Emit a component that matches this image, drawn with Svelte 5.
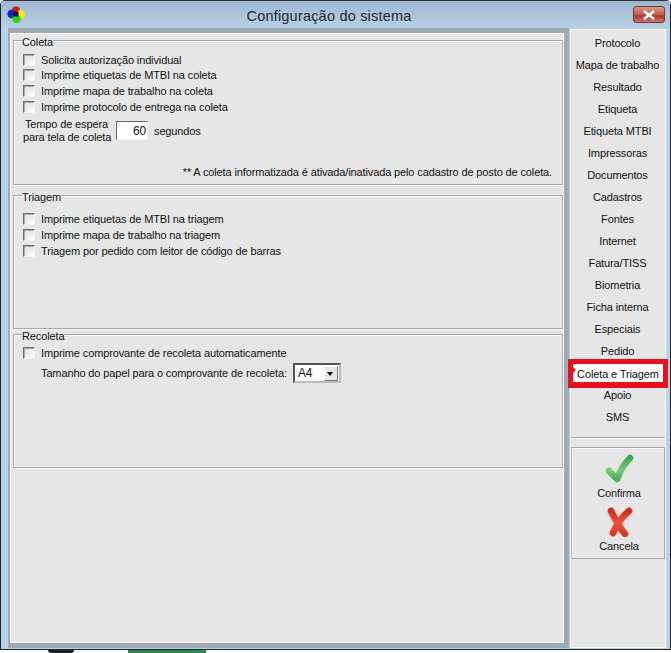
<script>
  const coleta = [
    'Solicita autorização individual',
    'Imprime etiquetas de MTBI na coleta',
    'Imprime mapa de trabalho na coleta',
    'Imprime protocolo de entrega na coleta'
  ];
  const triagem = [
    'Imprime etiquetas de MTBI na triagem',
    'Imprime mapa de trabalho na triagem',
    'Triagem por pedido com leitor de código de barras'
  ];
  const menu = [
    'Protocolo', 'Mapa de trabalho', 'Resultado', 'Etiqueta', 'Etiqueta MTBI',
    'Impressoras', 'Documentos', 'Cadastros', 'Fontes', 'Internet', 'Fatura/TISS',
    'Biometria', 'Ficha interna', 'Especiais', 'Pedido', 'Coleta e Triagem', 'Apoio', 'SMS'
  ];
</script>

<div class="screen">
  <div class="window">
    <header class="titlebar">
      <svg class="app-icon" width="18" height="18" viewBox="0 0 18 18">
        <circle cx="9" cy="4.5" r="4.2" fill="#d8141c" />
        <circle cx="4.5" cy="8" r="4.2" fill="#1420c8" />
        <circle cx="13.5" cy="8.5" r="4.4" fill="#f4ee20" />
        <circle cx="9.5" cy="13" r="4.2" fill="#30d020" />
        <rect x="6.5" y="5.5" width="5" height="5" fill="#0a0a3a" />
      </svg>
      <h1>Configuração do sistema</h1>
      <button class="close" aria-label="Fechar">
        <svg width="14" height="10" viewBox="0 0 14 10">
          <path d="M2 1 L12 9 M12 1 L2 9" stroke="#fff" stroke-width="2.6" fill="none" />
        </svg>
      </button>
    </header>

    <div class="client">
      <div class="left">
        <main class="panel">
          <fieldset class="coleta">
            <legend><span>Coleta</span></legend>
            <div class="checks">
              {#each coleta as item}
                <label class="check"><span class="box"></span>{item}</label>
              {/each}
            </div>
            <div class="wait">
              <span class="wait-label">Tempo de espera<br />para tela de coleta</span>
              <span class="input">60</span>
              <span>segundos</span>
            </div>
            <p class="note">** A coleta informatizada é ativada/inativada pelo cadastro de posto de coleta.</p>
          </fieldset>

          <fieldset class="triagem">
            <legend><span>Triagem</span></legend>
            <div class="checks">
              {#each triagem as item}
                <label class="check"><span class="box"></span>{item}</label>
              {/each}
            </div>
          </fieldset>

          <fieldset class="recoleta">
            <legend><span>Recoleta</span></legend>
            <label class="check"><span class="box"></span>Imprime comprovante de recoleta automaticamente</label>
            <div class="paper">
              <span>Tamanho do papel para o comprovante de recoleta:</span>
              <span class="select">
                <span class="value">A4</span>
                <span class="arrow"></span>
              </span>
            </div>
          </fieldset>
        </main>
      </div>

      <aside class="right">
        <nav class="menu">
          {#each menu as item}
            <div class="menu-item" class:active={item === 'Coleta e Triagem'}>{item}</div>
          {/each}
        </nav>
        <div class="actions">
          <div class="action">
            <svg width="30" height="30" viewBox="0 0 30 30">
              <defs>
                <linearGradient id="ok" x1="0" y1="0" x2="0" y2="1">
                  <stop offset="0" stop-color="#4f9f58" />
                  <stop offset="0.6" stop-color="#7cc878" />
                  <stop offset="1" stop-color="#52a858" />
                </linearGradient>
              </defs>
              <path d="M5 17 L13 25 C16 17 20 10 26 4" fill="none" stroke="#d4ecd0" stroke-width="9" stroke-linecap="round" stroke-linejoin="round" />
              <path d="M5 17 L13 25 C16 17 20 10 26 4" fill="none" stroke="url(#ok)" stroke-width="6.5" stroke-linecap="round" stroke-linejoin="round" />
            </svg>
            <span>Confirma</span>
          </div>
          <div class="action">
            <svg width="30" height="30" viewBox="0 0 30 30">
              <defs>
                <linearGradient id="no" x1="0" y1="0" x2="0" y2="1">
                  <stop offset="0" stop-color="#c8301f" />
                  <stop offset="0.5" stop-color="#f0503c" />
                  <stop offset="1" stop-color="#d23a28" />
                </linearGradient>
              </defs>
              <path d="M7 4 C11 12 15 20 21 27 M25 4 C19 9 13 17 9 26" fill="none" stroke="#f6c8bc" stroke-width="8.5" stroke-linecap="round" />
              <path d="M7 4 C11 12 15 20 21 27 M25 4 C19 9 13 17 9 26" fill="none" stroke="url(#no)" stroke-width="6.5" stroke-linecap="round" />
            </svg>
            <span>Cancela</span>
          </div>
        </div>
      </aside>
    </div>
  </div>
  <div class="behind">
    <span class="blob"></span>
    <span class="green"></span>
  </div>
</div>

<style>
  :global(body) {
    margin: 0;
    background: #fff;
  }
  .screen {
    width: 671px;
    height: 653px;
    overflow: hidden;
    font-family: "Liberation Sans", Arial, sans-serif;
    font-size: 11px;
    letter-spacing: -0.125px;
    color: #111;
  }
  .window {
    box-sizing: border-box;
    height: 650px;
    display: flex;
    flex-direction: column;
    border: 1px solid #222;
    border-top-color: #333;
    border-radius: 5px 5px 0 0;
    background: #b8d4e6;
  }
  .titlebar {
    height: 27px;
    flex: none;
    display: flex;
    align-items: center;
    padding: 0 4px 0 6px;
    box-sizing: border-box;
    background: linear-gradient(#9fb8d2, #b9d0e3);
  }
  .app-icon {
    flex: none;
    filter: blur(0.4px);
  }
  h1 {
    flex: 1;
    margin: 0;
    padding-top: 2px;
    text-align: center;
    font-size: 14.5px;
    font-weight: 400;
    color: #1a2a36;
    letter-spacing: 0.2px;
  }
  .close {
    width: 32px;
    height: 17px;
    margin: 0 1px 0 0;
    padding: 0;
    display: flex;
    align-items: center;
    justify-content: center;
    border: 1px solid #6a3a36;
    border-radius: 3px;
    background: linear-gradient(#dc9a8e, #c0584a 50%, #b03828 60%, #cc7868);
  }
  .client {
    flex: 1;
    display: flex;
    gap: 1px;
    padding: 0 4px 1px 7px;
    min-height: 0;
  }
  .left {
    box-sizing: border-box;
    width: 561px;
    padding: 5px 5px 5px 2px;
    display: flex;
    background: #9eabb5;
  }
  .panel {
    box-sizing: border-box;
    flex: 1;
    padding: 1px 0 0 2px;
    background: #e6e6e6;
    border: 1px solid #fff;
  }
  fieldset {
    box-sizing: border-box;
    width: 550px;
    margin: 0;
    padding: 0 0 0 9px;
    border: 1px solid #a8a8a8;
    box-shadow: 1px 1px 0 #fafafa, inset 1px 1px 0 #fafafa;
  }
  legend {
    margin-left: -1px;
    padding: 0;
    line-height: 11px;
    font-size: 11px;
  }
  legend span {
    position: relative;
    top: 2px;
  }
  .coleta {
    height: 150px;
  }
  .triagem {
    height: 139px;
    margin-top: 5px;
  }
  .recoleta {
    height: 139px;
  }
  .checks {
    display: flex;
    flex-direction: column;
  }
  .coleta .checks {
    padding-top: 6px;
  }
  .coleta .check {
    height: 15.67px;
  }
  .triagem .checks {
    padding-top: 10px;
  }
  .check {
    height: 16px;
    display: flex;
    align-items: center;
    gap: 6px;
  }
  .box {
    box-sizing: border-box;
    width: 12px;
    height: 12px;
    flex: none;
    background: linear-gradient(135deg, #dcdcdc, #fff);
    border: 1px solid;
    border-color: #6e6e6e #f4f4f4 #f4f4f4 #6e6e6e;
    box-shadow: inset 1px 1px 0 #aaa;
  }
  .wait {
    display: flex;
    align-items: center;
    gap: 6px;
    margin-top: 3px;
  }
  .wait-label {
    box-sizing: border-box;
    width: 87px;
    padding-right: 2px;
    text-align: right;
    line-height: 13px;
    white-space: nowrap;
  }
  .input {
    box-sizing: border-box;
    width: 32px;
    height: 19px;
    padding: 0 1px 0 0;
    background: #fff;
    text-align: right;
    line-height: 18px;
    font-size: 12px;
    border: 1px solid;
    border-color: #666 #eee #eee #666;
  }
  .note {
    margin: 22px 0 0;
    padding-right: 10px;
    text-align: right;
  }
  .recoleta .check {
    margin-top: 5px;
  }
  .paper {
    display: flex;
    align-items: center;
    gap: 6px;
    margin: 2px 0 0 18px;
  }
  .select {
    box-sizing: border-box;
    width: 48px;
    height: 20px;
    display: flex;
    align-items: center;
    justify-content: space-between;
    padding: 0 1px 0 3px;
    background: #fff;
    border: 2px solid;
    border-color: #555 #bbb #bbb #555;
    font-size: 12px;
  }
  .arrow {
    width: 14px;
    height: 15px;
    position: relative;
    background: #e6e6e6;
    border: 1px solid;
    border-color: #fff #777 #777 #fff;
    box-sizing: border-box;
  }
  .arrow::after {
    content: "";
    position: absolute;
    left: 2px;
    top: 5px;
    border: 3.5px solid transparent;
    border-top: 4px solid #000;
    border-bottom: 0;
  }
  .right {
    width: 96px;
    flex: none;
    margin-top: 1px;
    display: flex;
    flex-direction: column;
    background: #e6e6e6;
    border: 1px solid #fff;
    box-sizing: border-box;
  }
  .menu {
    box-sizing: border-box;
    height: 408px;
    padding-top: 2px;
    border-bottom: 1px solid #a8a8a8;
    box-shadow: 0 1px 0 #fafafa;
  }
  .menu-item {
    height: 22px;
    padding-right: 1px;
    line-height: 22px;
    text-align: center;
    white-space: nowrap;
  }
  .menu-item.active {
    box-sizing: border-box;
    height: 29px;
    margin: -3px -3px -4px;
    padding-right: 0;
    line-height: 20px;
    background: #fff;
    border: solid #e8101c;
    border-width: 5px 5px 6px;
    position: relative;
  }
  .menu-item.active::before {
    content: "";
    position: absolute;
    left: 0;
    top: 3px;
    border: 3px solid transparent;
    border-left: 3px solid #e8101c;
    border-right: 0;
  }
  .actions {
    box-sizing: border-box;
    margin-top: 9px;
    height: 112px;
    border: 1px solid #a8a8a8;
    box-shadow: inset 1px 1px 0 #fafafa;
    padding: 6px 0 0 2px;
    display: flex;
    flex-direction: column;
    gap: 7px;
  }
  .action {
    display: flex;
    flex-direction: column;
    align-items: center;
    gap: 3px;
    line-height: 13px;
  }
  .behind {
    height: 3px;
    position: relative;
    background: #fff;
  }
  .blob {
    position: absolute;
    left: 48px;
    top: 0;
    width: 26px;
    height: 3px;
    border-radius: 0 0 10px 10px;
    background: #222;
  }
  .green {
    position: absolute;
    left: 128px;
    top: 0;
    width: 78px;
    height: 3px;
    background: #2a8a50;
  }
</style>
